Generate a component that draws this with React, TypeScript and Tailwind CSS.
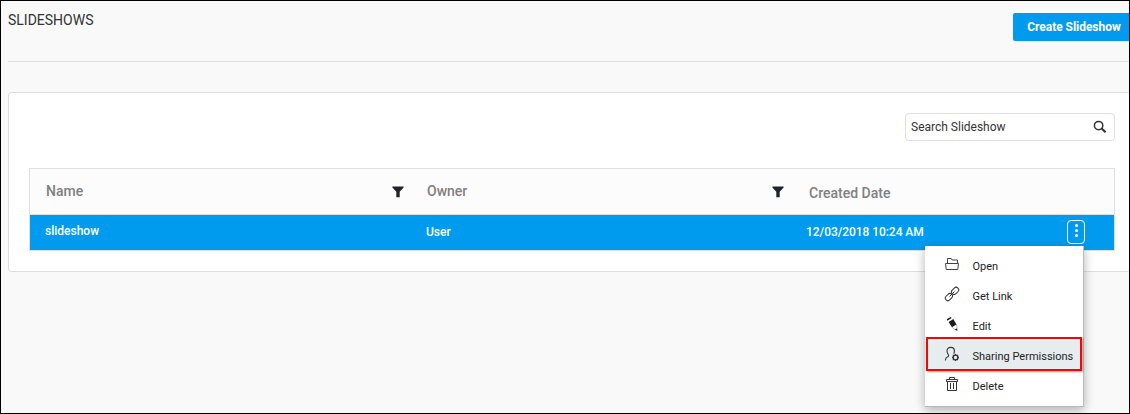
import type { ReactNode } from "react";

function FunnelIcon() {
  return (
    <svg width="12" height="12" viewBox="0 0 12 12" fill="#212529" aria-hidden="true">
      <path d="M.4.4h11.2v1L7.7 5.8v5.4H4.3V5.8L.4 1.4z" />
    </svg>
  );
}

function SearchIcon() {
  return (
    <svg width="14" height="14" viewBox="0 0 14 14" fill="none" stroke="#333" aria-hidden="true">
      <circle cx="5.6" cy="5.6" r="4.2" strokeWidth="1.5" />
      <path d="M8.6 8.5l4 3.8" strokeWidth="2.1" />
    </svg>
  );
}

function FolderIcon() {
  return (
    <svg width="16" height="16" viewBox="0 0 16 16" fill="none" stroke="#444" strokeWidth="1" aria-hidden="true">
      <path d="M3.500 7.500V2.500h3.700l1 1.500h5.300v3.500M1.500 7.500h13l-.7 6H2.200z" />
    </svg>
  );
}

function LinkIcon() {
  return (
    <svg width="16" height="16" viewBox="0 0 16 16" fill="none" stroke="#333" strokeWidth="1" aria-hidden="true">
      <rect x="-4" y="-2.600" width="8" height="5.200" rx="2.600" transform="translate(4.900 11.100) rotate(-45)" />
      <rect x="-4" y="-2.600" width="8" height="5.200" rx="2.600" transform="translate(11.100 4.900) rotate(-45)" />
      <path d="M5.500 10.500l5-5" />
    </svg>
  );
}

function PencilIcon() {
  return (
    <svg width="16" height="16" viewBox="0 0 16 16" fill="#1c1c1c" aria-hidden="true">
      <path d="M2.800 3.300L6.600 1l1 1-4.200 2.700z" />
      <path d="M4.600 6l4.700-2.900 3.200 5.300-4.600 2.900z" />
      <path d="M8.200 11.300l3.100 2.500M12.500 8.400l.6 3.900" fill="none" stroke="#999" strokeWidth=".7" />
      <path d="M10.800 13.500l2.300-1.300.3 2.900z" />
    </svg>
  );
}

function UserGearIcon() {
  return (
    <svg width="16" height="16" viewBox="0 0 16 16" fill="none" stroke="#333" aria-hidden="true">
      <path
        d="M1.300 14.400c.1-2.300 1-3.100 2.700-3.800.8-.4.800-1.200.3-1.900C3.300 7.500 3 6.200 3 4.800 3 2.700 4.500 1.400 6.700 1.400s3.700 1.300 3.700 3.500c0 1.100-.2 2-.7 2.900"
        strokeWidth="1.100"
      />
      <circle cx="11.500" cy="11.500" r="2.300" strokeWidth="1.200" />
      <path
        d="M11.500 8v1.200M11.500 13.800V15M8 11.500h1.200M13.800 11.500H15M9 9l.9.900M13.100 13.100L14 14M9 14l.9-.9M13.100 9.900L14 9"
        strokeWidth="1.300"
      />
    </svg>
  );
}

function TrashIcon() {
  return (
    <svg width="16" height="16" viewBox="0 0 16 16" fill="none" stroke="#333" strokeWidth="1" aria-hidden="true">
      <path d="M5.500 3.500v-2h5v2M2.500 3.500h11v2h-11zM3.500 5.500v9h9v-9M6.500 7v6M9.500 7v6" />
    </svg>
  );
}

function MenuItem({ icon, label, active = false }: { icon: ReactNode; label: string; active?: boolean }) {
  return (
    <li className={active ? "flex h-[30px] items-center bg-[#e7ecee] pl-[19px]" : "flex h-[30px] items-center pl-[19px]"}>
      <span className="mb-1 h-4 w-4">{icon}</span>
      <span className="ml-[12.5px] pt-[2px] whitespace-nowrap text-[11px] leading-4 text-[#222]">{label}</span>
    </li>
  );
}

export default function App() {
  return (
    <main className="relative flex h-[414px] w-[1130px] flex-col overflow-hidden border border-black bg-[#f9f9f9] pl-[7px] font-[Roboto,sans-serif] text-[#333]">
      <header className="flex h-[61px] shrink-0 items-start justify-between border-b border-[#dcdfe2]">
        <h1 className="mt-[10px] text-[14px] leading-[18px]">SLIDESHOWS</h1>
        <button className="mt-3 h-7 w-[116px] rounded-l-[2px] bg-[#009bef] pl-[6px] text-xs font-bold tracking-[-0.04px] whitespace-nowrap text-white">
          Create Slideshow
        </button>
      </header>

      <section className="mt-[30px] flex h-[180px] shrink-0 flex-col rounded-l-[4px] border border-r-0 border-[#dcdfe2] bg-white pt-5 pr-[14px] pl-5">
        <label className="flex h-7 w-[210px] items-center justify-between self-end rounded-[4px] border border-[#dcdfe2] pr-[7px] pl-[5px]">
          <span className="text-[12px] leading-4">Search Slideshow</span>
          <SearchIcon />
        </label>

        <div className="mt-[27px] border border-[#dddfe0]">
          <div className="flex h-[46px] items-center border-b border-[#dddfe0] bg-[#fcfcfc] text-[14px] font-medium leading-4 text-[#808080]">
            <div className="flex w-[381px] items-center justify-between pl-4">
              <span className="pb-px">Name</span>
              <span className="mr-[7px]"><FunnelIcon /></span>
            </div>
            <div className="flex w-[381px] items-center justify-between pl-4">
              <span className="pb-px">Owner</span>
              <span className="mr-2"><FunnelIcon /></span>
            </div>
            <div className="pt-[2px] pl-[17px]">Created Date</div>
          </div>
          <div className="flex h-[35px] items-center bg-[#009bef] text-[12px] font-medium leading-4 text-white">
            <div className="w-[381px] pb-[3px] pl-[15px]">slideshow</div>
            <div className="w-[381px] pb-[2px] pl-[15px]">User</div>
            <div className="grow pb-[2px] pl-[14px] tracking-[-0.06px]">12/03/2018 10:24 AM</div>
            <button className="mr-[29px] mb-px flex h-6 w-[18px] flex-col items-center justify-center gap-[2px] rounded-[4px] border border-white pb-[3px]" aria-label="Slideshow actions">
              <span className="h-[3px] w-[3px] rounded-full bg-white" />
              <span className="h-[3px] w-[3px] rounded-full bg-white" />
              <span className="h-[3px] w-[3px] rounded-full bg-white" />
            </button>
          </div>
        </div>
      </section>

      <ul className="absolute top-[245px] left-[924px] h-[161px] w-[159px] border-r border-b border-[#bbb] bg-white pt-[5px] shadow-[0_3px_10px_rgba(0,0,0,0.3)]">
        <MenuItem icon={<FolderIcon />} label="Open" />
        <MenuItem icon={<LinkIcon />} label="Get Link" />
        <MenuItem icon={<PencilIcon />} label="Edit" />
        <MenuItem icon={<UserGearIcon />} label="Sharing Permissions" active />
        <MenuItem icon={<TrashIcon />} label="Delete" />
        <li className="pointer-events-none absolute top-[91px] left-px h-[34px] w-[156px] border-2 border-[#f00] shadow-[1px_1px_2px_rgba(0,0,0,0.3)]" aria-hidden="true" />
      </ul>
    </main>
  );
}
